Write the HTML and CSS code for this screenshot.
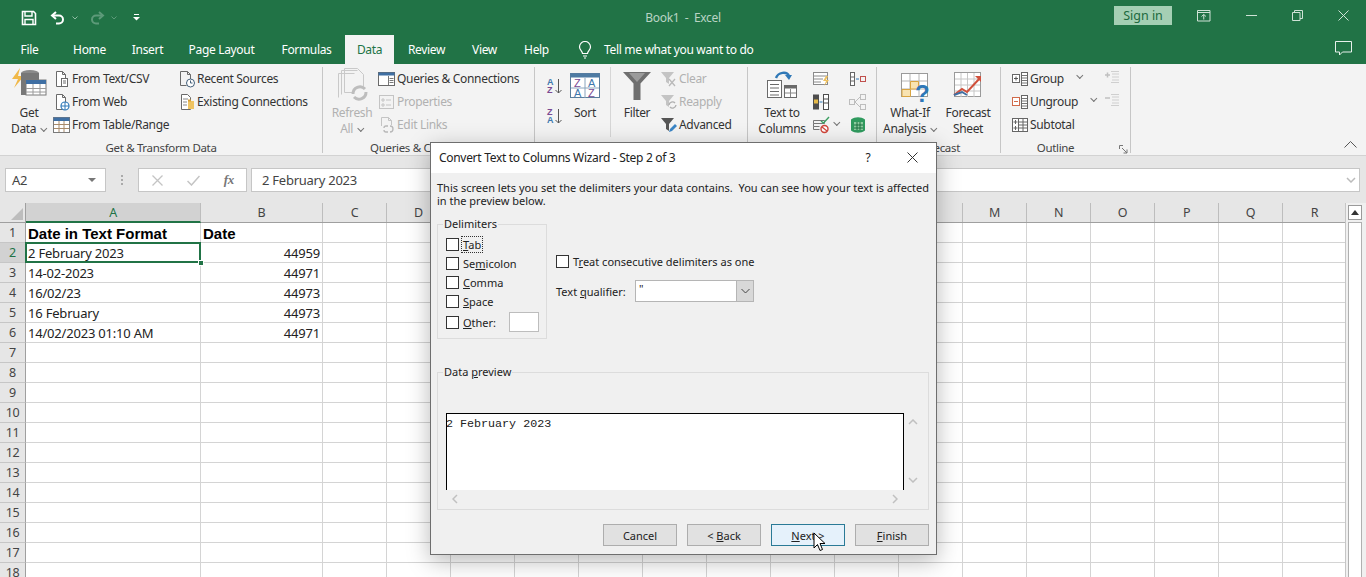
FILE: index.html
```html
<!DOCTYPE html>
<html lang="en">
<head>
<meta charset="utf-8">
<title>Book1 - Excel</title>
<link rel="stylesheet" href="styles.css">
</head>
<body>
<div class="app">
  <header class="titlebar">
    <div class="qat">
      <svg class="q-save" width="16" height="16" viewBox="0 0 16 16"><path d="M1.500 1.500h11l2 2v11h-13z" fill="none" stroke="#fff" stroke-width="1.600"/><path d="M4 2v4h7V2" fill="none" stroke="#fff" stroke-width="1.400"/><path d="M4 14V9.500h8V14" fill="none" stroke="#fff" stroke-width="1.400"/></svg>
      <svg class="q-undo" width="16" height="14" viewBox="0 0 16 14"><path d="M6 1L2 4.500 6 8" fill="none" stroke="#fff" stroke-width="2"/><path d="M2.500 4.500h6.500a4 4 0 0 1 0 8H6" fill="none" stroke="#fff" stroke-width="2"/></svg>
      <svg class="q-chev" width="6" height="4" viewBox="0 0 6 4"><path d="M.5.500L3 3 5.500.5" fill="none" stroke="#8fbca3"/></svg>
      <svg class="q-redo" width="16" height="14" viewBox="0 0 16 14"><path d="M10 1l4 3.500L10 8" fill="none" stroke="#5d9a79" stroke-width="2"/><path d="M13.500 4.500H7a4 4 0 0 0 0 8h3" fill="none" stroke="#5d9a79" stroke-width="2"/></svg>
      <svg class="q-chev2" width="6" height="4" viewBox="0 0 6 4"><path d="M.5.500L3 3 5.500.5" fill="none" stroke="#5d9a79"/></svg>
      <svg class="q-cust" width="7" height="7" viewBox="0 0 7 7"><path d="M1 .5h5" stroke="#fff"/><path d="M0 3h7L3.500 6.500z" fill="#fff"/></svg>
    </div>
    <div class="doc-title">Book1&nbsp; -&nbsp; Excel</div>
    <div class="win">
      <button class="signin">Sign in</button>
      <svg class="w-disp" width="14" height="12" viewBox="0 0 14 12"><path d="M.5.500h12.500v10.500H.5zM.5 2.500h12.500M6.750 9.500V4.500M4.500 6.500l2.250-2 2.250 2" fill="none" stroke="#cfe2d6"/></svg>
      <svg class="w-min" width="11" height="1" viewBox="0 0 11 1"><path d="M0 .5h11" stroke="#cfe2d6"/></svg>
      <svg class="w-max" width="11" height="11" viewBox="0 0 11 11"><path d="M.5 2.500h7.500v8H.5zM2.500 2.500V.5h8v8H8" fill="none" stroke="#cfe2d6"/></svg>
      <svg class="w-close" width="11" height="11" viewBox="0 0 11 11"><path d="M.5.500l10 10M10.500.5l-10 10" stroke="#cfe2d6"/></svg>
    </div>
  </header>

  <nav class="tabs">
    <span class="tab t-file">File</span>
    <span class="tab t-home">Home</span>
    <span class="tab t-insert">Insert</span>
    <span class="tab t-page">Page Layout</span>
    <span class="tab t-form">Formulas</span>
    <span class="tab tab-on t-data">Data</span>
    <span class="tab t-review">Review</span>
    <span class="tab t-view">View</span>
    <span class="tab t-help">Help</span>
    <div class="tell">
      <svg width="14" height="18" viewBox="0 0 14 18"><path d="M4.500 12.500C4.500 10 1.500 9 1.500 6a5.500 5.500 0 0 1 11 0c0 3-3 4-3 6.500zM5 15h4M6 17h2" fill="none" stroke="#fff" stroke-width="1.200"/></svg>
      <span>Tell me what you want to do</span>
    </div>
    <svg class="comment" width="17" height="15" viewBox="0 0 17 15"><path d="M.5.500h16v10.500H7.500l-3 3v-3h-4z" fill="none" stroke="#e8f1ec"/></svg>
  </nav>

  <section class="ribbon">
    <div class="group g-get">
      <div class="gbody">
        <div class="big big-get">
          <svg class="bigicon" width="36" height="36" viewBox="0 0 36 36"><path d="M9 1L1 12h6l-4 9 10-12H7z" fill="#f0b848"/><ellipse cx="19" cy="6" rx="9" ry="3" fill="#8a8a8a"/><path d="M10 6v22h9V13h9V6z" fill="#777"/><rect x="15" y="13" width="20" height="15" fill="#fff" stroke="#7a7a7a"/><rect x="15" y="13" width="20" height="4" fill="#3f6fa3"/><path d="M15 21.500h20M15 25h20M22 17v11M29 17v11" stroke="#9a9a9a"/></svg>
          <span>Get</span><span>Data <i class="chev"></i></span>
        </div>
        <div class="col col-get1">
          <div class="item"><svg class="ic" width="18" height="18" viewBox="0 0 18 18"><path d="M3.500 1.500h6l3 3v12h-9zM9.500 1.500v3h3" fill="#fff" stroke="#6a6a6a"/><rect x="8.500" y="8.500" width="6" height="8" fill="#fff" stroke="#6a6a6a"/><path d="M10 11h3M10 13h3" stroke="#6a6a6a"/></svg>From Text/CSV</div>
          <div class="item"><svg class="ic" width="18" height="18" viewBox="0 0 18 18"><path d="M3.500 1.500h6l3 3v12h-9zM9.500 1.500v3h3" fill="#fff" stroke="#6a6a6a"/><circle cx="12" cy="13" r="4" fill="#fff" stroke="#2e78b8" stroke-width="1.200"/><path d="M8 13h8M12 9v8" stroke="#2e78b8"/></svg>From Web</div>
          <div class="item"><svg class="ic" width="18" height="18" viewBox="0 0 18 18"><rect x=".5" y="1.500" width="16" height="15" fill="#fff" stroke="#7a7a7a"/><rect x=".5" y="1.500" width="16" height="3.500" fill="#3f6fa3"/><path d="M1 8.500h15M1 12.500h15M6 5v11M11 5v11" stroke="#a88a6a"/></svg>From Table/Range</div>
        </div>
        <div class="col col-get2">
          <div class="item"><svg class="ic" width="18" height="18" viewBox="0 0 18 18"><path d="M2.500 1.500h7l3 3v5M9.500 1.500v3h3M2.500 1.500v14h6" fill="none" stroke="#6a6a6a"/><circle cx="12.500" cy="13" r="4" fill="#fff" stroke="#43607a"/><path d="M12.500 10.500V13h2" fill="none" stroke="#43607a"/></svg>Recent Sources</div>
          <div class="item"><svg class="ic" width="18" height="18" viewBox="0 0 18 18"><path d="M3.500 1.500h6l3 3v12h-9z" fill="#fff" stroke="#6a6a6a"/><path d="M5 6h5M5 9h4M5 12h4" stroke="#888"/><path d="M10 8h6v8h-6z" fill="#efc463"/><path d="M10 6.500h3v2h-3z" fill="#d69f36"/></svg>Existing Connections</div>
        </div>
      </div>
      <div class="glabel">Get &amp; Transform Data</div>
    </div>

    <div class="group g-query">
      <div class="gbody">
        <div class="big big-refresh dim">
          <svg class="bigicon" width="34" height="36" viewBox="0 0 34 36"><path d="M3.500 6.500h16M3.500 6.500v24M6.500 3.500h16M6.500 3.500v24M9.500 1.500h13l6 6v12M9.500 1.500v24h8" fill="none" stroke="#c9c9c9"/><path d="M18 27a7 7 0 0 1 12-5M31 25a7 7 0 0 1-12 5" fill="none" stroke="#bdbdbd" stroke-width="3"/></svg>
          <span>Refresh</span><span>All <i class="chev"></i></span>
        </div>
        <div class="col col-q">
          <div class="item"><svg class="ic" width="18" height="18" viewBox="0 0 18 18"><rect x=".5" y="2.500" width="16" height="13" fill="#fff" stroke="#6a6a6a"/><rect x=".5" y="2.500" width="16" height="3" fill="#3f6fa3"/><path d="M10.500 6v9M11.500 8.500h4M11.500 10.500h4M11.500 12.500h4" stroke="#777"/></svg>Queries &amp; Connections</div>
          <div class="item dim"><svg class="ic" width="18" height="18" viewBox="0 0 18 18"><rect x="1.500" y="2.500" width="14" height="13" fill="none" stroke="#c4c4c4"/><path d="M4 6h2v2H4zM4 11h2v2H4zM8 7h5M8 12h5" fill="none" stroke="#c4c4c4"/></svg>Properties</div>
          <div class="item dim"><svg class="ic" width="18" height="18" viewBox="0 0 18 18"><path d="M3.500 10V1.500h7l3 3V9M10.500 1.500v3h3" fill="none" stroke="#c4c4c4"/><path d="M6 12a2 2 0 0 1 2-2h2M6 14a2 2 0 0 0 2 2h2M12 10a2.500 2.500 0 0 1 0 6" fill="none" stroke="#b8b8b8" stroke-width="1.300"/></svg>Edit Links</div>
        </div>
      </div>
      <div class="glabel">Queries &amp; Connections</div>
    </div>

    <div class="group g-sort">
      <div class="gbody">
        <div class="col col-az">
          <div class="az-btn"><svg width="20" height="20" viewBox="0 0 20 20"><text x="1" y="9" class="az a-blue">A</text><text x="1" y="17" class="az a-purple">Z</text><path d="M12.500 3v14M9.500 14l3 3 3-3" fill="none" stroke="#555"/></svg></div>
          <div class="az-btn"><svg width="20" height="20" viewBox="0 0 20 20"><text x="1" y="9" class="az a-purple">Z</text><text x="1" y="17" class="az a-blue">A</text><path d="M12.500 3v14M9.500 14l3 3 3-3" fill="none" stroke="#555"/></svg></div>
        </div>
        <div class="big big-sort">
          <svg class="bigicon" width="30" height="36" viewBox="0 -3 30 36"><rect x=".5" y="3.500" width="29" height="24" fill="#fff" stroke="#5a7d9c"/><rect x=".5" y="3.500" width="29" height="4" fill="#4e7ba3"/><path d="M15 8v20M1 18h28" stroke="#8aa4bc"/><text x="4" y="17" class="az2 a-purple">Z</text><text x="18" y="17" class="az2 a-blue">A</text><text x="4" y="27" class="az2 a-blue">A</text><text x="18" y="27" class="az2 a-purple">Z</text></svg>
          <span>Sort</span>
        </div>
        <div class="innersep"></div>
        <div class="big big-filter">
          <svg class="bigicon" width="30" height="36" viewBox="0 0 30 36"><path d="M1 5h28L18.500 16.500V33h-7V16.500z" fill="#6f6f6f"/><path d="M7 6l8 9 8-9z" fill="#9b9b9b"/></svg>
          <span>Filter</span>
        </div>
        <div class="col col-filter">
          <div class="item dim"><svg class="ic" width="18" height="18" viewBox="0 0 18 18"><path d="M1 2h13L9 8v6L6 12V8z" fill="#c4c4c4"/><path d="M9 9l6 7M15 9l-6 7" stroke="#b9b9b9" stroke-width="1.300"/></svg>Clear</div>
          <div class="item dim"><svg class="ic" width="18" height="18" viewBox="0 0 18 18"><path d="M1 2h13L9 8v6L6 12V8z" fill="#c4c4c4"/><path d="M9 12a3.500 3.500 0 0 1 6-2M16 12a3.500 3.500 0 0 1-6 2" fill="none" stroke="#b0b0b0" stroke-width="1.400"/></svg>Reapply</div>
          <div class="item"><svg class="ic" width="18" height="18" viewBox="0 0 18 18"><path d="M1 2h13L9 8v7L6 13V8z" fill="#555"/><path d="M9 16l1-3 5-5 2 2-5 5z" fill="#3a85c6"/></svg>Advanced</div>
        </div>
      </div>
      <div class="glabel">&nbsp;</div>
    </div>

    <div class="group g-tools">
      <div class="gbody">
        <div class="big big-ttc">
          <svg class="bigicon" width="32" height="36" viewBox="0 0 32 36"><path d="M10 11c2-6 11-7 13-2" fill="none" stroke="#2f78b7" stroke-width="2.400"/><path d="M19 8h7l-3 5z" fill="#2f78b7"/><rect x="1.500" y="13.500" width="14" height="17" fill="#fff" stroke="#6a6a6a"/><path d="M4 17.500h9M4 21h9M4 24.500h9M4 28h9" stroke="#6a6a6a"/><rect x="18.500" y="18.500" width="12" height="12" fill="#fff" stroke="#6a6a6a"/><rect x="18.500" y="18.500" width="12" height="3" fill="#6a6a6a"/><path d="M24.500 22v8M19 26h11" stroke="#888"/></svg>
          <span>Text to</span><span>Columns</span>
        </div>
        <div class="col col-t1">
          <div class="tool"><svg width="18" height="18" viewBox="0 0 18 18"><rect x="1.500" y="2.500" width="14" height="12" fill="#fff" stroke="#8a8a8a"/><path d="M2 6h13M2 9h9M2 12h7" stroke="#8a8a8a"/><path d="M14 6l-3 5h3l-2 5 5-6h-3l2-4z" fill="#eec05e"/></svg></div>
          <div class="tool"><svg width="18" height="18" viewBox="0 0 18 18"><rect x="1" y="1.500" width="6" height="15" fill="#4d4d4d"/><rect x="2" y="6.500" width="4" height="4" fill="#e5b948"/><rect x="11.500" y="1.500" width="5" height="15" fill="#fff" stroke="#4d4d4d"/><path d="M12 6h4M12 10h4" stroke="#4d4d4d"/><path d="M7.500 9h3" stroke="#2f78b7"/></svg></div>
          <div class="tool tool-chev"><svg width="18" height="18" viewBox="0 0 18 18"><path d="M1.500 4.500h11v3h-11zM1.500 7.500v3h6M1.500 10.500v3h6" fill="none" stroke="#777"/><path d="M9 5l2.500 2L17 1" fill="none" stroke="#3ea063" stroke-width="1.400"/><circle cx="12.500" cy="13" r="3.500" fill="#fff" stroke="#d0453a" stroke-width="1.400"/><path d="M10 11l5 4" stroke="#d0453a" stroke-width="1.200"/></svg><i class="chev"></i></div>
        </div>
        <div class="col col-t2">
          <div class="tool"><svg width="18" height="18" viewBox="0 0 18 18"><rect x="1.500" y="2.500" width="4" height="13" fill="#fff" stroke="#666"/><path d="M2 7h3M2 11h3" stroke="#666"/><path d="M7 9h3" stroke="#2f78b7"/><rect x="11.500" y="6.500" width="5" height="5" fill="none" stroke="#c0504d"/></svg></div>
          <div class="tool"><svg width="18" height="18" viewBox="0 0 18 18"><rect x=".5" y="6.500" width="5" height="5" fill="none" stroke="#bdbdbd"/><rect x="11.500" y="1.500" width="5" height="5" fill="none" stroke="#bdbdbd"/><rect x="11.500" y="11.500" width="5" height="5" fill="none" stroke="#bdbdbd"/><path d="M6 9l5-5M6 9l5 5" stroke="#bdbdbd"/></svg></div>
          <div class="tool"><svg width="18" height="18" viewBox="0 0 18 18"><path d="M2 3.500c4-3 10-3 14 0v11c-4 3-10 3-14 0z" fill="#2f9a5e"/><path d="M5 6h9v8H5z" fill="#8dcc9f"/><path d="M8 6v8M11 6v8M5 9h9M5 12h9" stroke="#1b7141"/></svg></div>
        </div>
      </div>
      <div class="glabel">&nbsp;</div>
    </div>

    <div class="group g-fore">
      <div class="gbody">
        <div class="big big-whatif">
          <svg class="bigicon" width="30" height="36" viewBox="0 -5 30 36"><rect x=".5" y="1.500" width="26" height="23" fill="#fff" stroke="#9a9a9a"/><path d="M9 2v23M18 2v23M1 9h25M1 17h25" stroke="#b5b5b5"/><path d="M9.500 9.500h8v7.500h-8zM1 17.500h8.500v7H1z" fill="#f8e3b2" stroke="#d9a441"/><text x="14" y="30" class="qmark">?</text></svg>
          <span>What-If</span><span>Analysis <i class="chev"></i></span>
        </div>
        <div class="big big-sheet">
          <svg class="bigicon" width="30" height="36" viewBox="0 -4 30 36"><rect x="1.500" y="1.500" width="26" height="24" fill="#fff" stroke="#9a9a9a"/><path d="M8 2v24M14.500 2v24M21 2v24M2 8h25M2 14h25M2 20h25" stroke="#c6c6c6"/><path d="M1 24l8-6 5 3 13-14" fill="none" stroke="#d0503c" stroke-width="2"/><path d="M1 24l8-3 5 3" fill="none" stroke="#3f6fa3" stroke-width="2"/><path d="M22 5h6v6z" fill="#d0503c"/></svg>
          <span>Forecast</span><span>Sheet</span>
        </div>
      </div>
      <div class="glabel">Forecast</div>
    </div>

    <div class="group g-outline">
      <div class="gbody">
        <div class="col col-o1">
          <div class="item"><svg class="ic" width="18" height="18" viewBox="0 0 18 18"><rect x="1.500" y="4.500" width="7" height="8" fill="#fff" stroke="#666"/><path d="M3 8.500h4M5 6.500v4" stroke="#555"/><rect x="10.500" y="2.500" width="6" height="13" fill="#fff" stroke="#666"/><path d="M11 5.500h5M11 8h5M11 10.500h5M11 13h5" stroke="#777"/></svg>Group<i class="chev chev-g"></i></div>
          <div class="item"><svg class="ic" width="18" height="18" viewBox="0 0 18 18"><rect x="1.500" y="4.500" width="7" height="8" fill="#fff" stroke="#d06a4a"/><path d="M3 8.500h4" stroke="#d06a4a"/><rect x="10.500" y="2.500" width="6" height="13" fill="#fff" stroke="#666"/><path d="M11 5.500h5M11 8h5M11 10.500h5M11 13h5" stroke="#777"/></svg>Ungroup<i class="chev chev-u"></i></div>
          <div class="item"><svg class="ic" width="18" height="18" viewBox="0 0 18 18"><rect x="1.500" y="2.500" width="15" height="13" fill="#fff" stroke="#666"/><path d="M7.500 3v12M12 3v12M8 6h8M8 9h8M8 12h8M2.500 6h4M4.500 4v4M2.500 12h4M4.500 10v4" stroke="#666"/></svg>Subtotal</div>
        </div>
        <div class="col col-o2">
          <div class="tool"><svg width="16" height="18" viewBox="0 0 16 18"><path d="M0 5h5M2.500 2.500v5" stroke="#c0c0c0" stroke-width="1.500"/><path d="M6 1.500h8M7 4h7M7 7h7M7 10h7M6 12.500h8" stroke="#cfcfcf"/></svg></div>
          <div class="tool"><svg width="16" height="18" viewBox="0 0 16 18"><path d="M0 5h5" stroke="#c0c0c0" stroke-width="1.500"/><path d="M6 1.500h8M7 4h7M7 7h7M7 10h7M6 12.500h8" stroke="#cfcfcf"/></svg></div>
        </div>
      </div>
      <div class="glabel glabel-o">Outline<svg class="launch" width="9" height="9" viewBox="0 0 9 9"><path d="M.5 4V.5H4M3 3l5 5M8 4.500V8H4.500" fill="none" stroke="#777"/></svg></div>
    </div>

    <div class="ribbon-end">
      <svg width="13" height="7" viewBox="0 0 13 7"><path d="M.5 6.500l6-6 6 6" fill="none" stroke="#555"/></svg>
    </div>
  </section>

  <div class="fbar">
    <div class="namebox"><span>A2</span><svg width="8" height="4" viewBox="0 0 8 4"><path d="M0 0h8L4 4z" fill="#777"/></svg></div>
    <div class="grip"><i></i><i></i><i></i></div>
    <div class="fbtns">
      <svg width="11" height="11" viewBox="0 0 11 11"><path d="M.5.500l10 10M10.500.5l-10 10" stroke="#c4c4c4" stroke-width="1.300"/></svg>
      <svg width="13" height="11" viewBox="0 0 13 11"><path d="M.5 6l4 4 8-9" fill="none" stroke="#c4c4c4" stroke-width="1.500"/></svg>
      <span class="fx">fx</span>
    </div>
    <div class="finput"><span>2 February 2023</span><svg width="10" height="6" viewBox="0 0 10 6"><path d="M1 1l4 4 4-4" fill="none" stroke="#bbb" stroke-width="1.500"/></svg></div>
  </div>

  <div class="sheet">
    <div class="cells">
      <div class="row head">
        <div class="corner"><svg width="14" height="14" viewBox="0 0 14 14"><path d="M13 1v12H1z" fill="#bdbdbd"/></svg></div>
        <div class="ch ch-a on">A</div><div class="ch ch-b">B</div>
        <div class="ch">C</div><div class="ch">D</div><div class="ch"></div><div class="ch"></div><div class="ch"></div><div class="ch"></div><div class="ch"></div><div class="ch"></div><div class="ch"></div><div class="ch"></div><div class="ch">M</div><div class="ch">N</div><div class="ch">O</div><div class="ch">P</div><div class="ch">Q</div><div class="ch">R</div>
      </div>
      <div class="row"><div class="rh">1</div><div class="c a bold">Date in Text Format</div><div class="c b bold">Date</div><div class="rest"></div></div>
      <div class="row"><div class="rh on">2</div><div class="c a sel">2 February 2023<i class="handle"></i></div><div class="c b num">44959</div><div class="rest"></div></div>
      <div class="row"><div class="rh">3</div><div class="c a">14-02-2023</div><div class="c b num">44971</div><div class="rest"></div></div>
      <div class="row"><div class="rh">4</div><div class="c a">16/02/23</div><div class="c b num">44973</div><div class="rest"></div></div>
      <div class="row"><div class="rh">5</div><div class="c a">16 February</div><div class="c b num">44973</div><div class="rest"></div></div>
      <div class="row"><div class="rh">6</div><div class="c a">14/02/2023 01:10 AM</div><div class="c b num">44971</div><div class="rest"></div></div>
      <div class="row"><div class="rh">7</div><div class="c a"></div><div class="c b"></div><div class="rest"></div></div>
      <div class="row"><div class="rh">8</div><div class="c a"></div><div class="c b"></div><div class="rest"></div></div>
      <div class="row"><div class="rh">9</div><div class="c a"></div><div class="c b"></div><div class="rest"></div></div>
      <div class="row"><div class="rh">10</div><div class="c a"></div><div class="c b"></div><div class="rest"></div></div>
      <div class="row"><div class="rh">11</div><div class="c a"></div><div class="c b"></div><div class="rest"></div></div>
      <div class="row"><div class="rh">12</div><div class="c a"></div><div class="c b"></div><div class="rest"></div></div>
      <div class="row"><div class="rh">13</div><div class="c a"></div><div class="c b"></div><div class="rest"></div></div>
      <div class="row"><div class="rh">14</div><div class="c a"></div><div class="c b"></div><div class="rest"></div></div>
      <div class="row"><div class="rh">15</div><div class="c a"></div><div class="c b"></div><div class="rest"></div></div>
      <div class="row"><div class="rh">16</div><div class="c a"></div><div class="c b"></div><div class="rest"></div></div>
      <div class="row"><div class="rh">17</div><div class="c a"></div><div class="c b"></div><div class="rest"></div></div>
      <div class="row"><div class="rh">18</div><div class="c a"></div><div class="c b"></div><div class="rest"></div></div>
    </div>
    <div class="vscroll">
      <div class="vbtn"><svg width="8" height="5" viewBox="0 0 8 5"><path d="M4 0l4 5H0z" fill="#333"/></svg></div>
      <div class="vthumb"></div>
    </div>
  </div>
</div>

<div class="dialog">
  <div class="dlg-title">
    <span class="dlg-name">Convert Text to Columns Wizard - Step 2 of 3</span>
    <span class="dlg-help">?</span>
    <svg width="11" height="11" viewBox="0 0 11 11"><path d="M.5.500l10 10M10.500.5l-10 10" stroke="#333"/></svg>
  </div>
  <div class="dlg-body">
    <p class="intro">This screen lets you set the delimiters your data contains.  You can see how your text is affected
in the preview below.</p>
    <div class="opts">
      <fieldset class="delims">
        <legend>Delimiters</legend>
        <label class="chk"><i class="box"></i><span class="focus"><u>T</u>ab</span></label>
        <label class="chk"><i class="box"></i><span>Se<u>m</u>icolon</span></label>
        <label class="chk"><i class="box"></i><span><u>C</u>omma</span></label>
        <label class="chk"><i class="box"></i><span><u>S</u>pace</span></label>
        <label class="chk chk-other"><i class="box"></i><span><u>O</u>ther:</span><i class="otherbox"></i></label>
      </fieldset>
      <div class="opts-right">
        <label class="chk"><i class="box"></i><span>T<u>r</u>eat consecutive delimiters as one</span></label>
        <div class="qual">
          <span class="qual-l">Text <u>q</u>ualifier:</span>
          <div class="select"><span class="qv">"</span><b><svg width="9" height="6" viewBox="0 0 9 6"><path d="M.5 1l4 4 4-4" fill="none" stroke="#444"/></svg></b></div>
        </div>
      </div>
    </div>
    <fieldset class="preview">
      <legend>Data <u>p</u>review</legend>
      <div class="pv-main">
        <div class="pv-box">2 February 2023</div>
        <div class="pv-v">
          <svg width="10" height="6" viewBox="0 0 10 6"><path d="M1 5l4-4 4 4" fill="none" stroke="#c0c0c0" stroke-width="1.500"/></svg>
          <svg width="10" height="6" viewBox="0 0 10 6"><path d="M1 1l4 4 4-4" fill="none" stroke="#c0c0c0" stroke-width="1.500"/></svg>
        </div>
      </div>
      <div class="pv-h">
        <svg width="6" height="10" viewBox="0 0 6 10"><path d="M5 1L1 5l4 4" fill="none" stroke="#c0c0c0" stroke-width="1.500"/></svg>
        <svg width="6" height="10" viewBox="0 0 6 10"><path d="M1 1l4 4-4 4" fill="none" stroke="#c0c0c0" stroke-width="1.500"/></svg>
      </div>
    </fieldset>
    <div class="btns">
      <button class="btn">Cancel</button>
      <button class="btn">&lt; <u>B</u>ack</button>
      <button class="btn btn-hot"><u>N</u>ext &gt;</button>
      <button class="btn"><u>F</u>inish</button>
    </div>
  </div>
</div>
<svg class="cursor" width="13" height="20" viewBox="0 0 13 20"><path d="M1 1v15l3.500-3.500 2.500 6 2.500-1-2.500-6H12z" fill="#fff" stroke="#000"/></svg>
</body>
</html>
```
FILE: styles.css
```css
* { box-sizing: border-box; }
html, body { margin: 0; height: 577px; overflow: hidden; }
body { font-family: "Noto Sans", sans-serif; font-size: 12px; letter-spacing: -.33px; color: #333; background: #fff; position: relative; }
svg { display: block; flex: none; }
i { font-style: normal; }

.app { width: 1366px; height: 577px; display: flex; flex-direction: column; }

/* title bar */
.titlebar { height: 35px; background: #217346; display: flex; align-items: center; color: #fff; flex: none; position: relative; }
.qat { width: 160px; display: flex; align-items: center; padding-left: 21px; }
.q-undo { margin-left: 13px; }
.q-chev { margin-left: 6px; }
.q-redo { margin-left: 11px; }
.q-chev2 { margin-left: 6px; }
.q-cust { margin-left: 16px; }
.doc-title { width: 1046px; text-align: center; color: #b9d3c4; font-size: 12px; }
.win { display: flex; align-items: center; position: absolute; left: 1114px; top: 6px; }
.signin { width: 58px; height: 19px; border: 0; padding: 0; background: #a5cfb4; color: #20693f; font: inherit; letter-spacing: 0; font-size: 12.500px; }
.w-disp { margin-left: 25px; }
.w-min { margin-left: 35px; }
.w-max { margin-left: 35px; }
.w-close { margin-left: 35px; }

/* tabs */
.tabs { height: 29px; background: #217346; display: flex; align-items: stretch; flex: none; color: #fff; position: relative; font-size: 12px; }
.tab { display: flex; align-items: center; justify-content: center; }
.t-file { width: 59px; }
.t-home { width: 61px; }
.t-insert { width: 55px; }
.t-page { width: 93px; }
.t-form { width: 77px; }
.t-data { width: 49px; }
.t-review { width: 65px; }
.t-view { width: 51px; }
.t-help { width: 53px; }
.tab-on { background: #f3f3f3; color: #217346; }
.tell { display: flex; align-items: center; gap: 12px; margin-left: 15px; }
.comment { position: absolute; left: 1335px; top: 6px; }

/* ribbon */
.ribbon { height: 92px; flex: none; display: flex; padding-top: 3px; background: #f3f3f3; border-bottom: 1px solid #d2d2d2; }
.group { height: 86px; border-right: 1px solid #c6c6c6; display: flex; flex-direction: column; flex: none; }
.gbody { height: 74px; display: flex; flex: none; }
.glabel { height: 12px; line-height: 14px; text-align: center; font-size: 11.500px; white-space: nowrap; color: #444; }
.g-get { width: 323px; }
.g-query { width: 212px; }
.g-sort { width: 213px; }
.g-tools { width: 129px; }
.g-fore { width: 124px; }
.g-outline { width: 130px; }
.glabel-o { position: relative; padding-right: 20px; }
.launch { position: absolute; left: 118px; top: 4px; }
.ribbon-end { flex: 1; display: flex; justify-content: flex-end; align-items: flex-end; padding: 0 9px 7px 0; }

.big { display: flex; flex-direction: column; align-items: center; line-height: 15.500px; white-space: nowrap; flex: none; }
.bigicon { height: 38px; width: auto; padding-bottom: 2px; overflow: visible; }
.big-get { margin-left: 8px; width: 42px; }
.big-refresh { margin-left: 10px; width: 38px; }
.big-sort { margin-left: 4px; width: 32px; }
.big-filter { margin-left: 9px; width: 34px; }
.big-ttc { margin-left: 10px; width: 48px; }
.big-whatif { margin-left: 8px; width: 50px; }
.big-whatif .bigicon { margin-left: 12px; }
.big-sheet { margin-left: 10px; width: 46px; }

.col { display: flex; flex-direction: column; flex: none; }
.item { height: 23px; display: flex; align-items: center; gap: 1px; white-space: nowrap; position: relative; }
.tool { height: 23px; display: flex; align-items: center; gap: 2px; }
.dim { color: #b1b1b1; }
.col-get1 { margin-left: 3px; width: 125px; }
.col-q { margin-left: 7px; }
.col-az { margin-left: 11px; width: 19px; padding-top: 9px; gap: 10px; }
.az-btn { height: 20px; }
.innersep { width: 1px; height: 70px; background: #d6d6d6; margin-left: 9px; }
.col-filter { margin-left: 6px; }
.col-t1 { margin-left: 6px; width: 37px; }
.col-o1 { margin-left: 10px; width: 94px; }
.chev { display: inline-block; width: 5px; height: 5px; border-right: 1px solid #777; border-bottom: 1px solid #777; transform: rotate(45deg) translate(-2px, -1px); margin-left: 3px; }
.chev-g { position: absolute; left: 64px; top: 8px; }
.chev-u { position: absolute; left: 78px; top: 8px; }
.az { font: 700 9px "Liberation Sans", sans-serif; letter-spacing: 0; }
.az2 { font: 400 11px "Liberation Sans", sans-serif; letter-spacing: 0; }
.a-blue { fill: #3f78ad; }
.a-purple { fill: #7a4a92; }
.qmark { font: 700 24px "Liberation Sans", sans-serif; fill: #2e78b8; letter-spacing: 0; }

/* formula bar */
.fbar { height: 47px; flex: none; background: #e6e6e6; display: flex; padding: 12px 6px 11px 5px; color: #444; }
.namebox, .fbtns, .finput { background: #fff; border: 1px solid #c6c6c6; height: 24px; display: flex; align-items: center; flex: none; }
.namebox { width: 101px; justify-content: space-between; padding: 0 9px 0 6px; font-size: 13px; }
.grip { width: 32px; display: flex; flex-direction: column; align-items: center; justify-content: center; gap: 2px; padding-right: 1px; }
.grip i { width: 2px; height: 2px; background: #aaa; }
.fbtns { width: 109px; padding: 0 12px 0 13px; justify-content: space-between; }
.fx { font: italic 700 13px "Liberation Serif", serif; color: #777; }
.finput { flex: 1; margin-left: 4px; padding: 0 3px 0 10px; justify-content: space-between; font-size: 13px; letter-spacing: -.25px; }

/* sheet */
.sheet { flex: 1; display: flex; min-height: 0; overflow: hidden; }
.cells { width: 1346px; flex: none; border-right: 1px solid #c6c6c6; }
.row { height: 20px; display: flex; }
.head { background: #e6e6e6; border-bottom: 1px solid #9f9f9f; }
.corner { width: 26px; padding: 4px 0 0 10px; border-right: 1px solid #9f9f9f; flex: none; }
.ch { width: 64px; flex: none; text-align: center; line-height: 19px; font-size: 12.500px; border-right: 1px solid #bdbdbd; color: #444; }
.ch-a { width: 175px; }
.ch-b { width: 122px; }
.ch.on { background: #d2d2d2; color: #217346; border-bottom: 2px solid #217346; height: 20px; }
.rh { width: 26px; flex: none; background: #e6e6e6; border-right: 1px solid #9f9f9f; border-bottom: 1px solid #c6c6c6; text-align: center; line-height: 20px; font-size: 12.500px; color: #444; }
.rh.on { background: #d2d2d2; color: #217346; }
.c { flex: none; border-right: 1px solid #d4d4d4; border-bottom: 1px solid #d4d4d4; padding: 0 2px; line-height: 20px; font-size: 13px; letter-spacing: -.2px; color: #222; white-space: nowrap; position: relative; }
.a { width: 175px; }
.b { width: 122px; }
.num { text-align: right; }
.c.bold { font: 700 15px/21px "Liberation Sans", sans-serif; letter-spacing: 0; color: #000; }
.rest { flex: 1; border-bottom: 1px solid #d4d4d4; background: repeating-linear-gradient(90deg, transparent 0 63px, #d4d4d4 63px 64px); }
.sel::after { content: ""; position: absolute; left: -1px; top: -1px; right: -1px; bottom: -1px; border: 2px solid #217346; }
.handle { position: absolute; right: -4px; bottom: -4px; box-sizing: content-box; width: 4px; height: 4px; background: #217346; border: 1px solid #fff; z-index: 2; }
.vscroll { flex: 1; background: #f0f0f0; padding: 2px 4px 0 2px; }
.vbtn { height: 15px; background: #fff; border: 1px solid #9a9a9a; display: flex; align-items: center; justify-content: center; }
.vthumb { height: 400px; margin-top: 2px; background: #fff; border: 1px solid #b0b0b0; }

/* dialog */
.dialog { position: absolute; left: 430px; top: 142px; width: 507px; height: 413px; border: 1px solid #6e6e6e; background: #f0f0f0; box-shadow: 0 6px 22px rgba(0,0,0,.28); display: flex; flex-direction: column; font-size: 11px; letter-spacing: 0; color: #222; }
.dlg-title { height: 30px; background: #fff; display: flex; align-items: center; padding: 0 18px 2px 8px; flex: none; }
.dlg-name { width: 432px; font-size: 12px; letter-spacing: -.3px; }
.dlg-help { width: 42px; font-size: 12px; }
.dlg-body { flex: 1; display: flex; flex-direction: column; padding: 8px 7px 0 6px; }
.intro { margin: 0; font-size: 11px; line-height: 13px; white-space: pre; height: 37px; flex: none; }
.opts { display: flex; height: 148px; flex: none; }
fieldset { margin: 0; padding: 0; border: 1px solid #dcdcdc; min-width: 0; }
legend { padding: 0 1px; margin-left: -3px; font-size: 11px; line-height: 12px; }
.delims { width: 110px; height: 121px; padding: 5px 0 0 8px; }
.chk { display: flex; align-items: center; gap: 4px; height: 19px; font-size: 11px; }
.box { width: 13px; height: 13px; background: #fff; border: 1px solid #333; flex: none; }
.focus { outline: 1px dotted #333; padding: 0 1px; margin-left: -1px; }
.chk-other { height: 22px; }
.otherbox { width: 30px; height: 20px; background: #fff; border: 1px solid #bdbdbd; margin-left: 9px; }
.opts-right { margin-left: 9px; padding-top: 34px; }
.qual { display: flex; align-items: center; margin-top: 9px; font-size: 11px; }
.qual-l { width: 79px; }
.select { width: 119px; height: 22px; background: #fff; border: 1px solid #b5b5b5; display: flex; justify-content: space-between; }
.qv { padding-left: 3px; line-height: 16px; }
.select b { width: 17px; background: #d8d8d8; border-left: 1px solid #b5b5b5; display: flex; align-items: center; justify-content: center; }
.preview { height: 144px; flex: none; padding: 35px 0 0 8px; }
.pv-main { display: flex; height: 77px; }
.pv-box { width: 458px; height: 77px; background: #fff; border: 2px solid #000; border-width: 1.500px 1.500px 0; font: 11.700px/20px "Liberation Mono", monospace; color: #222; text-indent: -1px; }
.pv-v { width: 19px; padding: 6px 0 6px 4px; display: flex; flex-direction: column; justify-content: space-between; height: 76px; }
.pv-h { width: 458px; display: flex; justify-content: space-between; align-items: center; padding: 0 6px; height: 17px; }
.btns { display: flex; gap: 10px; justify-content: flex-end; margin-top: 14px; }
.btn { width: 74px; height: 22px; padding: 0; background: #e1e1e1; border: 1px solid #adadad; font: inherit; font-size: 11px; color: #222; }
.btn-hot { background: #e5f1fb; border-color: #2a7a96; }
.cursor { position: absolute; left: 813px; top: 532px; }
```
